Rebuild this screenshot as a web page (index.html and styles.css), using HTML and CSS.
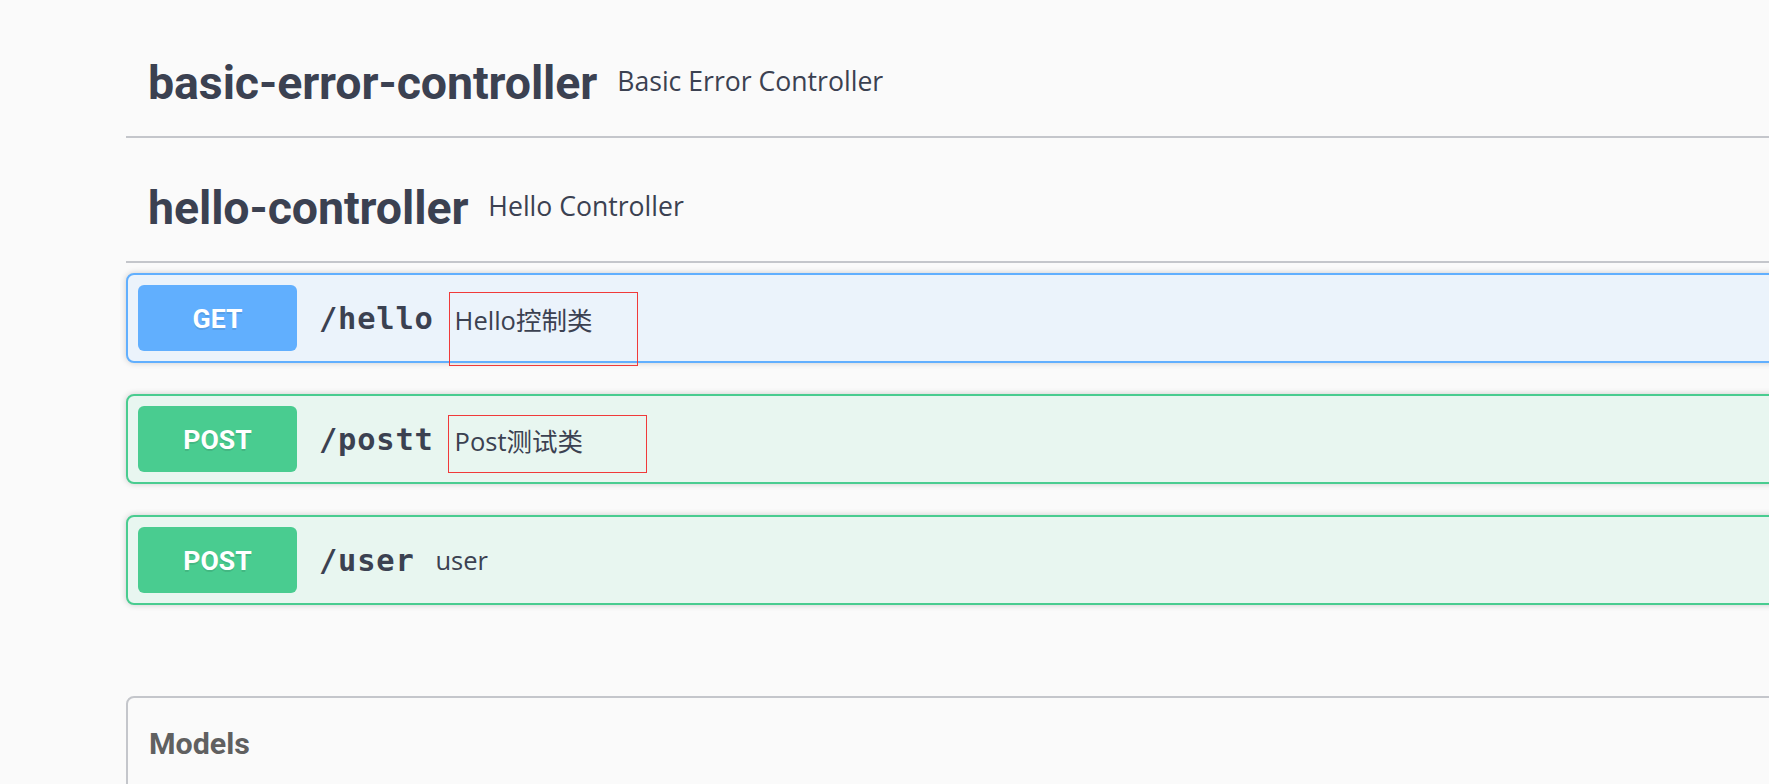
FILE: index.html
```html
<!DOCTYPE html>
<html lang="zh-CN">
<head>
<meta charset="utf-8">
<title>Swagger UI</title>
<link rel="stylesheet" href="styles.css">
</head>
<body>
<div class="wrapper">
  <section class="tag-section">
    <h3 class="tag"><span class="tag-name">basic-error-controller</span><small class="tag-desc">Basic Error Controller</small></h3>
  </section>
  <section class="tag-section">
    <h3 class="tag"><span class="tag-name">hello-controller</span><small class="tag-desc">Hello Controller</small></h3>
    <div class="ops">
      <div class="opblock opblock-get">
        <div class="summary">
          <span class="method">GET</span>
          <span class="path">/hello</span>
          <span class="desc">Hello控制类<span class="mark mark-hello"></span></span>
        </div>
      </div>
      <div class="opblock opblock-post">
        <div class="summary">
          <span class="method">POST</span>
          <span class="path">/postt</span>
          <span class="desc">Post测试类<span class="mark mark-post"></span></span>
        </div>
      </div>
      <div class="opblock opblock-post">
        <div class="summary">
          <span class="method">POST</span>
          <span class="path">/user</span>
          <span class="desc">user</span>
        </div>
      </div>
    </div>
  </section>
  <section class="models">
    <h4 class="models-title">Models</h4>
  </section>
</div>
</body>
</html>
```

FILE: styles.css
```css
html, body {
  margin: 0;
  padding: 0;
  background: #fafafa;
  overflow: hidden;
  height: 100%;
}

body {
  font-family: "Open Sans", "Noto Sans CJK SC", sans-serif;
  color: #3b4151;
}

.wrapper {
  margin-left: 126px;
  width: 2800px;
  padding-top: 23px;
}

.tag {
  margin: 0 0 10px;
  box-sizing: border-box;
  height: 115px;
  padding: 6px 20px 0 22px;
  display: flex;
  align-items: center;
  border-bottom: 2px solid #c4c6cb;
}

.tag-name {
  font-family: Roboto, "Liberation Sans", sans-serif;
  font-weight: 700;
  font-size: 46.5px;
  color: #3b4151;
  letter-spacing: -0.1px;
}

.tag-desc {
  font-family: "Open Sans", sans-serif;
  font-weight: 400;
  font-size: 26.6px;
  color: #3b4151;
  padding-left: 20px;
  margin-bottom: 4px;
}

.ops {
  display: flex;
  flex-direction: column;
  gap: 31px;
}

.opblock {
  border: 2px solid;
  border-radius: 8px;
  box-shadow: 0 0 6px rgba(0, 0, 0, 0.19);
}

.opblock-get {
  border-color: #61affe;
  background: #ebf3fb;
}

.opblock-post {
  border-color: #49cc90;
  background: #e8f6f0;
}

.summary {
  display: flex;
  align-items: center;
  padding: 10px;
}

.method {
  width: 159px;
  height: 66px;
  flex: none;
  display: flex;
  align-items: center;
  justify-content: center;
  border-radius: 6px;
  color: #fff;
  font-family: Roboto, "Liberation Sans", sans-serif;
  font-weight: 700;
  font-size: 26.6px;
  text-shadow: 0 2px 0 rgba(0, 0, 0, 0.1);
}

.opblock-get .method {
  background: #61affe;
}

.opblock-post .method {
  background: #49cc90;
}

.path {
  padding: 0 21px 0 22px;
  font-family: "DejaVu Sans Mono", "Liberation Mono", monospace;
  font-weight: 700;
  font-size: 30.4px;
  letter-spacing: 0.8px;
  color: #3b4151;
}

.desc {
  align-self: stretch;
  display: flex;
  align-items: center;
  position: relative;
  font-family: "Open Sans", "Noto Sans CJK SC", sans-serif;
  font-size: 25.5px;
  color: #3b4151;
}

.mark {
  position: absolute;
  border: 1px solid #f03a3a;
  box-sizing: border-box;
  pointer-events: none;
}

.mark-hello {
  left: -6px;
  top: 7px;
  width: 189px;
  height: 74px;
}

.mark-post {
  left: -7px;
  top: 9px;
  width: 199px;
  height: 58px;
}

.models {
  margin-top: 91px;
  border: 2px solid #c4c6cb;
  border-radius: 8px;
  height: 200px;
}

.models-title {
  margin: 0;
  padding: 28px 20px 20px 21px;
  font-family: Roboto, "Liberation Sans", sans-serif;
  font-weight: 700;
  font-size: 30.4px;
  line-height: normal;
  color: #606060;
}
```
